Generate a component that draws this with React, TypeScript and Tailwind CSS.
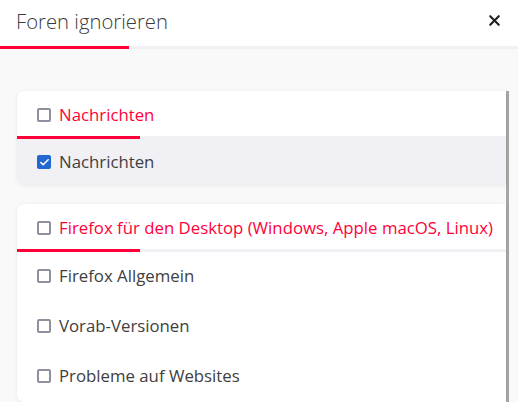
import { Check, X } from 'lucide-react'

type Forum = { label: string; checked?: boolean }

const groups: { title: string; highlight?: boolean; items: Forum[] }[] = [
  { title: 'Nachrichten', highlight: true, items: [{ label: 'Nachrichten', checked: true }] },
  {
    title: 'Firefox für den Desktop (Windows, Apple macOS, Linux)',
    items: [{ label: 'Firefox Allgemein' }, { label: 'Vorab-Versionen' }, { label: 'Probleme auf Websites' }],
  },
]

function Box({ checked }: { checked?: boolean }) {
  return checked ? (
    <span className="w-[14px] h-[14px] rounded-[2px] bg-[#2169d0] flex items-center justify-center shrink-0">
      <Check className="w-[11px] h-[11px] text-white" strokeWidth={3.5} />
    </span>
  ) : (
    <span className="w-[14px] h-[14px] rounded-[2px] border-2 border-[#8f8f9d] shrink-0" />
  )
}

export default function App() {
  return (
    <div className="w-[518px] h-[402px] overflow-hidden bg-[#f9f9fa] font-['Open_Sans',sans-serif]">
      {/* Header */}
      <div className="bg-white h-[46px] flex items-center justify-between pl-4 pr-4">
        <h1 className="text-[20.3px] text-[#3b3b3b] font-light pb-[4px]">Foren ignorieren</h1>
        <X className="w-[17px] h-[17px] text-[#222] mb-[6px] mr-[-1px]" strokeWidth={3} />
      </div>
      <div className="flex h-[3px] bg-[#f0f0f5]">
        <div className="w-[129px] bg-[#ff0039]" />
      </div>

      {/* List */}
      <div className="mt-[42px] ml-[17px] w-[492px] border-r-[3px] border-[#a6a6a6] flex flex-col gap-[20px]">
        {groups.map((g) => (
          <div key={g.title} className="bg-white rounded-l-[7px] shadow-[0_1px_4px_rgba(0,0,0,0.08)] overflow-hidden">
            <div className="h-[45px] flex items-center gap-[8px] pl-[20px] pt-[2px]">
              <Box />
              <span className="text-[16.8px] text-[#ff0039] whitespace-nowrap">{g.title}</span>
            </div>
            <div className="flex h-[3px] bg-[#f0f0f5]">
              <div className="w-[123px] bg-[#ff0039]" />
            </div>
            {g.items.map((it) => (
              <div
                key={it.label}
                className={`flex items-center gap-[8px] pl-[20px] ${g.highlight ? 'h-[45px] bg-[#f0f0f5] pt-[1px]' : 'h-[50px] pb-[2px]'}`}
              >
                <Box checked={it.checked} />
                <span className="text-[16.8px] text-[#404040] whitespace-nowrap">{it.label}</span>
              </div>
            ))}
          </div>
        ))}
      </div>
    </div>
  )
}
